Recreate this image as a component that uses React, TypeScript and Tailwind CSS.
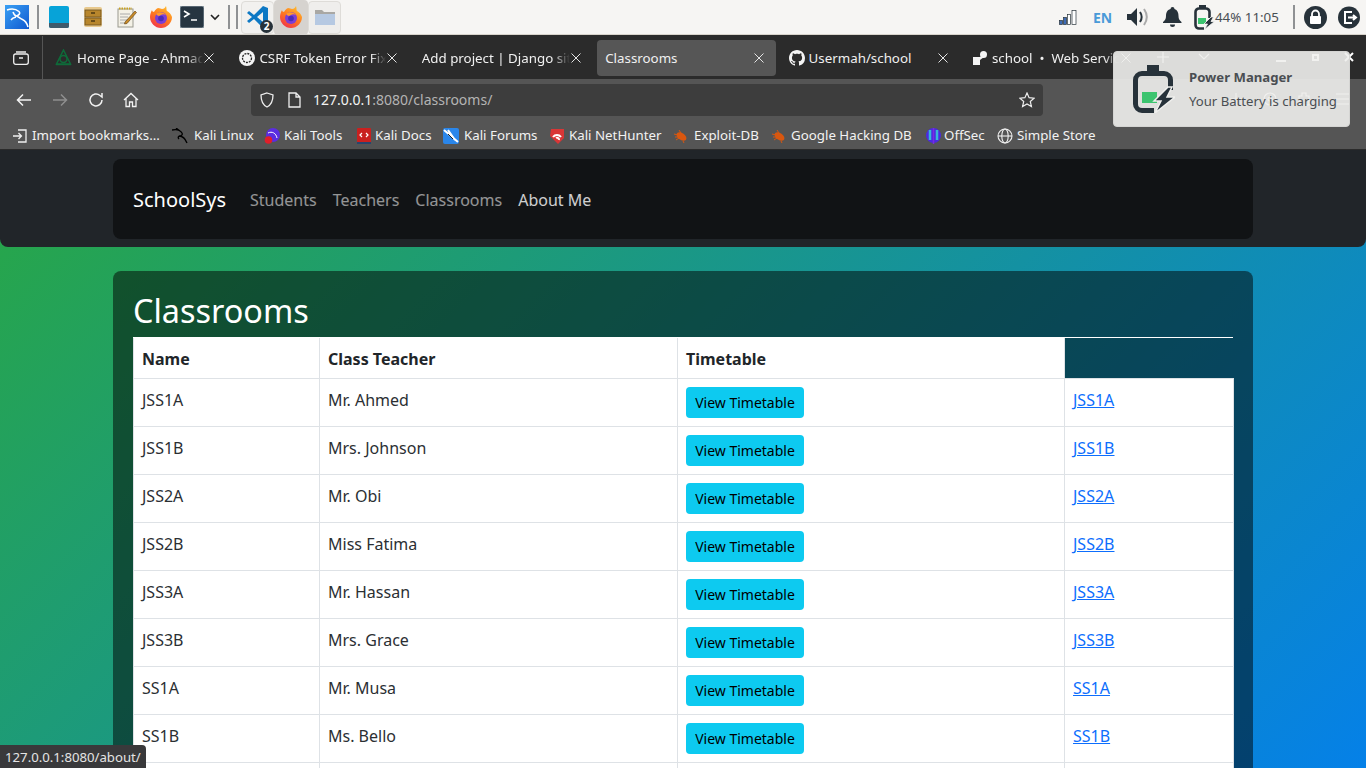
import React from "react";

const Ff = ({ s = 24, id }: { s?: number; id: string }) => (
  <svg width={s} height={s} viewBox="0 0 24 24">
    <defs>
      <linearGradient id={id} x1="0.8" y1="0" x2="0.2" y2="1">
        <stop offset="0" stopColor="#ffc02e" />
        <stop offset="0.5" stopColor="#ff7a1f" />
        <stop offset="1" stopColor="#f0304f" />
      </linearGradient>
    </defs>
    <path d="M17 1c1 3 0 4 1 5 2 1 4 3 5 6 0 6-5 11-11 11S1 18 1 12c0-3 1-5 2-7 0 1 1 2 2 2 1-2 2-3 4-4 2 0 3 1 4 1 2 0 3-1 4-3z" fill={`url(#${id})`} />
    <circle cx="12" cy="13" r="6" fill="#7b3fd6" />
    <path d="M7 9c3-3 8-2 10 1-2-1-4-1-5 0l-2 1c-1 0-2-1-3-2z" fill="#ff9a2e" />
    <circle cx="12" cy="13.5" r="2.8" fill="#4a2bb8" />
  </svg>
);

const X = ({ c = "#e4e4e4" }: { c?: string }) => (
  <svg width="16" height="16" viewBox="0 0 16 16" fill="none" stroke={c} strokeWidth="1">
    <path d="M3.5 3.5l9 9M12.5 3.5l-9 9" />
  </svg>
);

const Bug = () => (
  <svg width="16" height="16" viewBox="0 0 16 16" fill="#d9570f">
    <ellipse cx="8.5" cy="8.5" rx="5.5" ry="3.5" transform="rotate(35 8.5 8.5)" />
    <path d="M1 6l4 1M3 12l3-2M2 9h3M6 2l2 3M10 13l1 2" stroke="#d9570f" strokeWidth="1" />
  </svg>
);

const Tab = ({ icon, label, active, fade, im = 5 }: { icon?: React.ReactNode; label: string; active?: boolean; fade?: boolean; im?: number }) => (
  <div className={`w-[179px] h-[36px] shrink-0 flex items-center pl-2 pr-[9px] rounded ${active ? "bg-[#565656]" : ""}`}>
    {icon && <span style={{ marginRight: im }} className="w-[17px] h-[17px] shrink-0 flex items-center justify-center">{icon}</span>}
    <span className={`flex-1 min-w-0 overflow-hidden whitespace-pre text-[13.33px] translate-y-px text-[#f0f0f0] ${fade ? "[mask-image:linear-gradient(to_right,black_88%,transparent)]" : ""}`}>{label}</span>
    <span className="shrink-0 -ml-[2px]"><X /></span>
  </div>
);

const Bm = ({ w, icon, label, gap = 4 }: { w: number; icon: React.ReactNode; label: string; gap?: number }) => (
  <div style={{ width: w, columnGap: gap }} className="shrink-0 flex items-center whitespace-nowrap text-[13.3px] text-[#f2f2f2]">
    <span className="w-[16px] h-[16px] shrink-0 flex items-center justify-center">{icon}</span>
    {label}
  </div>
);

const rows: [string, string][] = [
  ["JSS1A", "Mr. Ahmed"],
  ["JSS1B", "Mrs. Johnson"],
  ["JSS2A", "Mr. Obi"],
  ["JSS2B", "Miss Fatima"],
  ["JSS3A", "Mr. Hassan"],
  ["JSS3B", "Mrs. Grace"],
  ["SS1A", "Mr. Musa"],
  ["SS1B", "Ms. Bello"],
];

const cell = "border border-[#dee2e6] px-2 pt-[9px] pb-[7px] align-top text-[#2b2f33] bg-white";
const btnCell = "border border-[#dee2e6] px-2 py-2 align-top bg-white";
const head = "border border-[#dee2e6] border-t-0 px-2 pt-[9px] pb-[7px] text-left font-bold text-[#212529] bg-white h-[40px]";

export default function App() {
  return (
    <div className="relative h-screen w-[1366px] overflow-hidden flex flex-col font-['Noto_Sans',sans-serif]">
      {/* Desktop panel */}
      <div className="h-[35px] shrink-0 bg-[#f6f5f3] border-b border-[#d8d4cc] flex items-center">
        <svg className="ml-[5px] shrink-0" width="24" height="24" viewBox="0 0 24 24">
          <defs>
            <linearGradient id="kali" x1="0" y1="0" x2="1" y2="1">
              <stop offset="0" stopColor="#3aa0f4" />
              <stop offset="1" stopColor="#1059d0" />
            </linearGradient>
          </defs>
          <rect width="24" height="24" fill="url(#kali)" />
          <path d="M2 5c4-1.500 9-1 12 1.500 2 2-.5 4-2.500 4.500 2 .5 3 2.500 6 3.500 2.500 1 4.500 4 5.500 7.500M8 7c1 2.500 2.500 4 3.500 4M11 12c-2 .5-4 1.500-5 3" fill="none" stroke="#fff" strokeWidth="1.600" />
        </svg>
        <div className="ml-[8px] w-[2px] h-[24px] bg-[#8f9193]" />
        <svg className="ml-[10px] shrink-0" width="20" height="22" viewBox="0 0 20 22">
          <rect width="20" height="22" rx="2" fill="#07a3d8" />
          <path d="M0 17h20v3a2 2 0 0 1-2 2H2a2 2 0 0 1-2-2z" fill="#3f5a6b" />
        </svg>
        <svg className="ml-[15px] shrink-0" width="18" height="20" viewBox="0 0 18 20">
          <rect width="18" height="20" rx="2" fill="#e8c98e" />
          <rect x="1" y="3" width="16" height="7" fill="#b8862c" stroke="#6b5120" strokeWidth="0.8" />
          <rect x="1" y="11" width="16" height="7" fill="#b8862c" stroke="#6b5120" strokeWidth="0.8" />
          <path d="M7 6h4M7 14h4" stroke="#4d3a12" strokeWidth="1.5" />
        </svg>
        <svg className="ml-[15px] shrink-0" width="20" height="22" viewBox="0 0 20 22">
          <rect x="1" y="3" width="15" height="18" fill="#f4f1e6" stroke="#9a9a90" />
          <path d="M2 2.5h13" stroke="#caa21e" strokeWidth="2" strokeDasharray="1.5 1" />
          <path d="M3 8h10M3 11h8M3 14h8M3 17h6" stroke="#aaa" />
          <path d="M8 16L18 5l1.5 1.5L10 17.5 7.5 18z" fill="#c98b28" stroke="#5a3d10" strokeWidth="0.6" />
        </svg>
        <span className="ml-[12px] shrink-0"><Ff id="ff1" /></span>
        <svg className="ml-[7px] shrink-0" width="24" height="22" viewBox="0 0 24 22">
          <rect width="24" height="22" rx="2" fill="#263541" stroke="#8b9aa5" />
          <path d="M4 5l5 3-5 3M11 14h6" stroke="#fff" strokeWidth="1.6" fill="none" />
        </svg>
        <svg className="ml-[6px] shrink-0" width="10" height="8" viewBox="0 0 10 8" fill="none" stroke="#222" strokeWidth="1.6">
          <path d="M1 2l4 4 4-4" />
        </svg>
        <div className="ml-[8px] w-[2px] h-[24px] bg-[#8f9193]" />
        <div className="ml-[6px] w-[2px] h-[24px] bg-[#8f9193]" />
        <div className="ml-[3px] w-[33px] h-[33px] rounded border border-[#dedcd8] bg-[#f2f1ef] flex items-center justify-center relative">
          <svg width="24" height="24" viewBox="0 0 24 24">
            <path d="M17 1L8 10 3 6 1 8l5 4-5 4 2 2 5-4 9 9 5-2V3z" fill="#0d78c4" />
            <path d="M17 7l-6 5 6 5z" fill="#f2f1ef" />
          </svg>
          <span className="absolute right-[0px] bottom-[0px] w-[13px] h-[13px] rounded-full bg-[#27323a] text-white text-[10px] leading-[13px] text-center font-bold">2</span>
        </div>
        <div className="w-[34px] h-[35px] rounded bg-[#d6d3cf] flex items-center justify-center"><Ff id="ff2" /></div>
        <div className="w-[33px] h-[33px] rounded border border-[#dedcd8] bg-[#efeeec] flex items-center justify-center">
          <svg width="22" height="18" viewBox="0 0 22 18">
            <path d="M1 2h7l2 2h11v13H1z" fill="#a9a8a4" />
            <path d="M1 6h20v11H1z" fill="#b6c9e2" />
          </svg>
        </div>
        <div className="flex-1" />
        <svg width="18" height="16" viewBox="0 0 18 16" className="shrink-0">
          <rect x="0.500" y="11.500" width="3" height="4" fill="#3d6bb5" stroke="#27323a" strokeWidth="0.700" />
          <rect x="4.500" y="8.500" width="3" height="7" fill="#3d6bb5" stroke="#27323a" strokeWidth="0.700" />
          <rect x="8.500" y="5.500" width="3" height="10" fill="#fff" stroke="#27323a" strokeWidth="0.700" />
          <rect x="13" y="1.500" width="4" height="14" fill="#fff" stroke="#27323a" strokeWidth="0.700" />
        </svg>
        <span className="ml-[16px] text-[14px] font-bold text-[#4a9ad8] w-[18px]">EN</span>
        <svg className="ml-[15px] shrink-0" width="24" height="22" viewBox="0 0 24 22">
          <path d="M1 8h4l6-6v18l-6-6H1z" fill="#27323a" />
          <path d="M14 6c2 3 2 7 0 10" fill="none" stroke="#27323a" strokeWidth="2" />
          <path d="M18 3c3.500 5 3.500 11 0 16" fill="none" stroke="#aaa" strokeWidth="2" />
        </svg>
        <svg className="ml-[13px] shrink-0" width="19" height="22" viewBox="0 0 19 22" fill="#27323a">
          <path d="M9.500 1a2 2 0 0 1 2 2c3 1 4 4 4 7 0 3 1 4 3 6v1H0v-1c2-2 3-3 3-6 0-3 1-6 4.500-7a2 2 0 0 1 2-2z" />
          <path d="M7 18.500h5a2.500 2.500 0 0 1-5 0z" />
        </svg>
        <svg className="ml-[12px] shrink-0" width="21" height="25" viewBox="0 0 21 25">
          <path d="M5 0h7v3H5z" fill="#27323a" />
          <path d="M10 23.500H5A3.500 3.500 0 0 1 1.500 20V7A3.500 3.500 0 0 1 5 3.500h7A3.500 3.500 0 0 1 15.500 7v6" fill="none" stroke="#27323a" strokeWidth="2.600" />
          <rect x="4" y="13" width="8" height="6" fill="#3cc46f" />
          <path d="M17 12l-7 7h3.500l-3 5.500 10-8H17l2.500-4.500z" fill="#27323a" stroke="#f6f5f3" strokeWidth="0.800" />
        </svg>
        <span className="w-[65px] whitespace-nowrap text-[13.33px] translate-y-px text-[#4a4f54]">44% 11:05</span>
        <div className="ml-[13px] w-[2px] h-[24px] bg-[#8f9193]" />
        <svg className="ml-[9px] shrink-0" width="23" height="23" viewBox="0 0 23 23">
          <circle cx="11.500" cy="11.500" r="11.500" fill="#27323a" />
          <rect x="6" y="10" width="11" height="8" rx="1" fill="#fff" />
          <path d="M8 10V8a3.500 3.500 0 0 1 7 0v2" fill="none" stroke="#fff" strokeWidth="1.800" />
        </svg>
        <svg className="ml-[11px] mr-[6px] shrink-0" width="22" height="23" viewBox="0 0 22 23">
          <circle cx="11" cy="11.500" r="11" fill="#27323a" />
          <path d="M14 6H7v11h7" fill="none" stroke="#fff" strokeWidth="2" />
          <path d="M10 11.500h8M15 9l3 2.500-3 2.500" fill="none" stroke="#fff" strokeWidth="2" />
        </svg>
      </div>

      <div className="h-[1px] shrink-0 bg-[#2b2b2b]" />

      {/* Tab strip */}
      <div className="h-[43px] shrink-0 bg-[#2b2b2b] flex items-center">
        <div className="w-[43px] h-full shrink-0 border-r border-[#555] flex items-center justify-center">
          <svg width="16" height="14" viewBox="0 0 16 14" fill="none" stroke="#eee" strokeWidth="1.300">
            <rect x="0.700" y="3" width="14.600" height="10.300" rx="2" />
            <path d="M3 1h10M6 7h4" />
          </svg>
        </div>
        <div className="ml-[4px] flex gap-[4.4px] items-center">
          <Tab fade label="Home Page - Ahmad Portfolio" icon={
            <svg width="17" height="17" viewBox="0 0 17 17" fill="none" stroke="#0f6b3a" strokeWidth="1.500">
              <path d="M8.500 1L15.500 15H1.500z" />
              <circle cx="8.500" cy="10" r="3.500" />
              <path d="M1 15.500h15" />
            </svg>
          } />
          <Tab fade im={4} label="CSRF Token Error Fix" icon={
            <svg width="16" height="16" viewBox="0 0 16 16">
              <circle cx="8" cy="8" r="8" fill="#f4f4f4" />
              <circle cx="8" cy="8" r="4.500" fill="none" stroke="#222" strokeWidth="1.300" strokeDasharray="2 1" />
            </svg>
          } />
          <Tab fade label="Add project | Django site admin" />
          <Tab active label="Classrooms" />
          <Tab im={3} label="Usermah/school" icon={
            <svg width="16" height="16" viewBox="0 0 16 16" fill="#f4f4f4">
              <path d="M8 0C3.580 0 0 3.580 0 8c0 3.540 2.290 6.530 5.470 7.590.4.070.55-.17.55-.38 0-.19-.01-.82-.01-1.490-2.010.37-2.530-.49-2.690-.94-.09-.23-.48-.94-.82-1.130-.28-.15-.68-.52-.01-.53.63-.01 1.080.58 1.230.82.720 1.210 1.870.87 2.330.66.070-.52.280-.87.510-1.070-1.780-.2-3.640-.89-3.640-3.950 0-.87.310-1.590.820-2.150-.08-.2-.36-1.020.080-2.120 0 0 .67-.21 2.200.82.640-.18 1.320-.27 2-.27s1.360.09 2 .27c1.530-1.040 2.200-.82 2.200-.82.440 1.100.160 1.920.080 2.120.51.560.820 1.270.820 2.150 0 3.070-1.870 3.750-3.650 3.950.290.250.540.730.540 1.480 0 1.070-.01 1.930-.01 2.200 0 .21.150.46.550.38A8.010 8.010 0 0 0 16 8c0-4.420-3.580-8-8-8z" />
            </svg>
          } />
          <Tab fade im={3} label={"school  •  Web Service"} icon={
            <svg width="16" height="16" viewBox="0 0 16 16" fill="#f4f4f4">
              <rect x="1" y="7" width="7" height="8" />
              <circle cx="11.500" cy="4.500" r="3.500" />
              <path d="M8 7l3-2 1 2-4 3z" />
            </svg>
          } />
        </div>
        <svg className="absolute left-[1156px] top-[50px]" width="14" height="14" viewBox="0 0 14 14" stroke="#eee" strokeWidth="1.200"><path d="M7 1v12M1 7h12" /></svg>
        <svg className="absolute left-[1198px] top-[53px]" width="12" height="8" viewBox="0 0 12 8" fill="none" stroke="#eee" strokeWidth="1.200"><path d="M1 1l5 5 5-5" /></svg>
        <div className="absolute left-[1276px] top-[60px] w-[10px] h-[2px] bg-white" />
        <div className="absolute left-[1312px] top-[54px] w-[7px] h-[7px] border-2 border-white" />
        <svg className="absolute left-[1344px] top-[52px]" width="10" height="10" viewBox="0 0 10 10" stroke="#fff" strokeWidth="2"><path d="M1 1l8 8M9 1l-8 8" /></svg>
      </div>

      {/* Nav toolbar */}
      <div className="h-[41px] shrink-0 bg-[#555555] flex items-center">
        <svg className="ml-[16px] shrink-0" width="16" height="14" viewBox="0 0 16 14" fill="none" stroke="#f2f2f2" strokeWidth="1.500"><path d="M15 7H2M7 1.500L1.500 7 7 12.500" /></svg>
        <svg className="ml-[20px] shrink-0" width="16" height="14" viewBox="0 0 16 14" fill="none" stroke="#8f8f8f" strokeWidth="1.500"><path d="M1 7h13M9 1.500L14.500 7 9 12.500" /></svg>
        <svg className="ml-[20px] shrink-0" width="16" height="16" viewBox="0 0 16 16" fill="none" stroke="#f2f2f2" strokeWidth="1.500"><path d="M14 8a6 6 0 1 1-2-4.500L14 5V1" /></svg>
        <svg className="ml-[19px] shrink-0" width="16" height="16" viewBox="0 0 16 16" fill="none" stroke="#f2f2f2" strokeWidth="1.300"><path d="M1 8l7-6.500L15 8M3 6.500V14.500h3.500V10h3v4.500H13V6.500" /></svg>
        <div className="ml-[112px] w-[792px] h-[32px] shrink-0 rounded bg-[#3d3d3d] flex items-center">
          <svg className="ml-[8px] shrink-0" width="16" height="16" viewBox="0 0 16 16" fill="none" stroke="#eee" strokeWidth="1.300"><path d="M8 1l6 2c0 6-2 10-6 12C4 13 2 9 2 3z" /></svg>
          <svg className="ml-[13px] shrink-0" width="13" height="16" viewBox="0 0 13 16" fill="none" stroke="#eee" strokeWidth="1.300"><path d="M1 1h7l4 4v10H1zM8 1v4h4" /></svg>
          <span className="ml-[12px] text-[14px] text-[#f2f2f2] whitespace-nowrap">127.0.0.1<span className="text-[#b4b4b4]">:8080/classrooms/</span></span>
          <div className="flex-1" />
          <svg className="mr-[8px] shrink-0" width="16" height="16" viewBox="0 0 16 16" fill="none" stroke="#eee" strokeWidth="1.200"><path d="M8 1l2.100 4.700 5 .5-3.800 3.300 1.100 5L8 11.900 3.600 14.500l1.100-5L.9 6.200l5-.5z" /></svg>
        </div>
        <svg className="absolute left-[1229px] top-[92px]" width="14" height="14" viewBox="0 0 14 14" stroke="#eee" strokeWidth="1.200"><path d="M7 1v12M1 7h12" /></svg>
        <svg className="absolute left-[1262px] top-[91px]" width="16" height="16" viewBox="0 0 16 16" fill="none" stroke="#eee" strokeWidth="1.200"><circle cx="8" cy="8" r="6" /><circle cx="8" cy="8" r="2" /></svg>
        <svg className="absolute left-[1296px] top-[91px]" width="16" height="16" viewBox="0 0 16 16" fill="none" stroke="#eee" strokeWidth="1.200"><path d="M3 5h3V2h4v3h3v9H3z" /></svg>
        <svg className="absolute left-[1335px] top-[92px]" width="16" height="14" viewBox="0 0 16 14" stroke="#eee" strokeWidth="1.200"><path d="M1 2h14M1 7h14M1 12h14" /></svg>
      </div>

      {/* Bookmarks */}
      <div className="h-[30px] shrink-0 bg-[#555555] flex items-center pl-[12px] pt-[2px] border-b border-[#2b2b2b]">
        <Bm w={160} label="Import bookmarks..." icon={
          <svg width="16" height="14" viewBox="0 0 16 14" fill="none" stroke="#f0f0f0" strokeWidth="1.300"><path d="M6 1h8v12H6M1 7h8M6.500 4l3 3-3 3" /></svg>
        } />
        <Bm w={92} gap={6} label="Kali Linux" icon={
          <svg width="16" height="16" viewBox="0 0 16 16" fill="none" stroke="#000" strokeWidth="1.300"><path d="M0 2c4-1 8 0 10 3 1 2-1 3-3 3 3 0 6 2 8 7M4 0l4 3M7 8c-1 1-1 2 0 3" /></svg>
        } />
        <Bm w={92} label="Kali Tools" icon={
          <svg width="16" height="16" viewBox="0 0 16 16"><circle cx="9" cy="7" r="7" fill="#5b2de0" /><path d="M4 5c4-2 8 0 9 5" fill="none" stroke="#fff" strokeWidth="1" /><circle cx="4.500" cy="12" r="3.800" fill="#e01f2a" /></svg>
        } />
        <Bm w={87} gap={3} label="Kali Docs" icon={
          <svg width="14" height="16" viewBox="0 0 14 16"><rect width="14" height="16" rx="1" fill="#c9201f" /><rect y="14" width="14" height="2" fill="#27466e" /><path d="M5 5L3 7l2 2M9 5l2 2-2 2" fill="none" stroke="#fff" strokeWidth="1.200" /></svg>
        } />
        <Bm w={106} gap={5} label="Kali Forums" icon={
          <svg width="16" height="16" viewBox="0 0 16 16"><rect width="16" height="16" rx="2" fill="#2a86ea" /><path d="M1 2l14 12M5 2l7 10" stroke="#fff" strokeWidth="2" /><path d="M5 6l5 5" stroke="#222" strokeWidth="1" /></svg>
        } />
        <Bm w={124} label="Kali NetHunter" icon={
          <svg width="16" height="16" viewBox="0 0 16 16"><path d="M2 1h13v9l-6 6-8-8z" fill="#d93636" /><path d="M4 9a5 5 0 0 1 8 0M7 10a2 2 0 0 1 3 2" fill="none" stroke="#fff" strokeWidth="2" /></svg>
        } />
        <Bm w={98} gap={5} label="Exploit-DB" icon={<Bug />} />
        <Bm w={154} label="Google Hacking DB" icon={<Bug />} />
        <Bm w={72} gap={3} label="OffSec" icon={
          <svg width="15" height="16" viewBox="0 0 15 16"><ellipse cx="7.500" cy="7.500" rx="7.500" ry="7.500" fill="#4b2be0" /><path d="M7.500 0v16" stroke="#7a2be0" strokeWidth="1.500" /><path d="M4 2v10M11 2v10" stroke="#38b6d8" strokeWidth="2.500" /></svg>
        } />
        <Bm w={110} label="Simple Store" icon={
          <svg width="16" height="16" viewBox="0 0 16 16" fill="none" stroke="#f0f0f0" strokeWidth="1.100"><circle cx="8" cy="8" r="7" /><ellipse cx="8" cy="8" rx="3.200" ry="7" /><path d="M1 8h14" /></svg>
        } />
      </div>

      {/* Page */}
      <div className="flex-1 min-h-0 overflow-hidden">
        <div className="h-[900px] bg-[linear-gradient(135deg,#28a745,#007bff)]">
          <header className="h-[97px] bg-[#212529] rounded-b-lg pt-[9px] flex justify-center">
            <nav className="w-[1140px] h-[80px] rounded-lg bg-[#111315] flex items-center pl-[20px] pt-[2px]">
              <span className="text-[20px] text-white mr-[24px]">SchoolSys</span>
              <span className="text-[16px] text-white/55 mr-[16px]">Students</span>
              <span className="text-[16px] text-white/55 mr-[16px]">Teachers</span>
              <span className="text-[16px] text-white/55 mr-[16px]">Classrooms</span>
              <span className="text-[16px] text-white/80">About Me</span>
            </nav>
          </header>
          <main className="mt-[24px] mx-auto w-[1140px] h-[700px] rounded-lg bg-black/50 pt-[20px] px-[20px]">
            <h1 className="h-[47px] border-b border-white text-[32.4px] leading-[38px] text-white w-[1100px]">Classrooms</h1>
            <table className="table-fixed border-collapse w-[1100px] text-[16px] leading-[24px]">
              <colgroup>
                <col className="w-[186px]" />
                <col className="w-[358px]" />
                <col className="w-[387px]" />
                <col className="w-[169px]" />
              </colgroup>
              <thead>
                <tr>
                  <th className={head}>Name</th>
                  <th className={head}>Class Teacher</th>
                  <th className={head}>Timetable</th>
                  <th className="border-b border-[#dee2e6]"></th>
                </tr>
              </thead>
              <tbody>
                {rows.map(([n, t]) => (
                  <tr key={n}>
                    <td className={cell}>{n}</td>
                    <td className={cell}>{t}</td>
                    <td className={btnCell}>
                      <button className="block h-[31px] w-[118px] rounded bg-[#0dcaf0] text-[14px] leading-[21px] text-black text-center">View Timetable</button>
                    </td>
                    <td className={cell}>
                      <a className="text-[#0d6efd] underline" href="#">{n}</a>
                    </td>
                  </tr>
                ))}
                <tr>
                  <td className={`${cell} h-[48px]`}></td>
                  <td className={cell}></td>
                  <td className={cell}></td>
                  <td className={cell}></td>
                </tr>
              </tbody>
            </table>
          </main>
        </div>
      </div>

      {/* Notification */}
      <div className="absolute left-[1113px] top-[51px] w-[237px] h-[76px] rounded bg-[#efefed]/90 border border-[#d5d5d3] flex items-center">
        <svg className="ml-[19px] shrink-0" width="42" height="48" viewBox="0 0 42 48">
          <path d="M14 0h12v8H14z" fill="#27323a" />
          <path d="M21 45.500H9A6.500 6.500 0 0 1 2.500 39V15A6.500 6.500 0 0 1 9 8.500h22a6.500 6.500 0 0 1 6.500 6.500v10" fill="none" stroke="#27323a" strokeWidth="5" />
          <rect x="9" y="27" width="15" height="11" fill="#3cc46f" />
          <path d="M35 22L21 36h7l-6 12 20-16h-8l5-10z" fill="#27323a" stroke="#efefed" strokeWidth="1.500" />
        </svg>
        <div className="ml-[14px] text-[13.15px] leading-[24px] text-[#4a4e52] whitespace-nowrap">
          <div className="font-bold">Power Manager</div>
          <div>Your Battery is charging</div>
        </div>
      </div>

      {/* Status link */}
      <div className="absolute left-0 bottom-0 h-[23px] w-[146px] bg-[#39393b] rounded-tr text-[13.2px] leading-[24px] pl-[5px] text-[#e4e4e4] whitespace-nowrap">127.0.0.1:8080/about/</div>
    </div>
  );
}
